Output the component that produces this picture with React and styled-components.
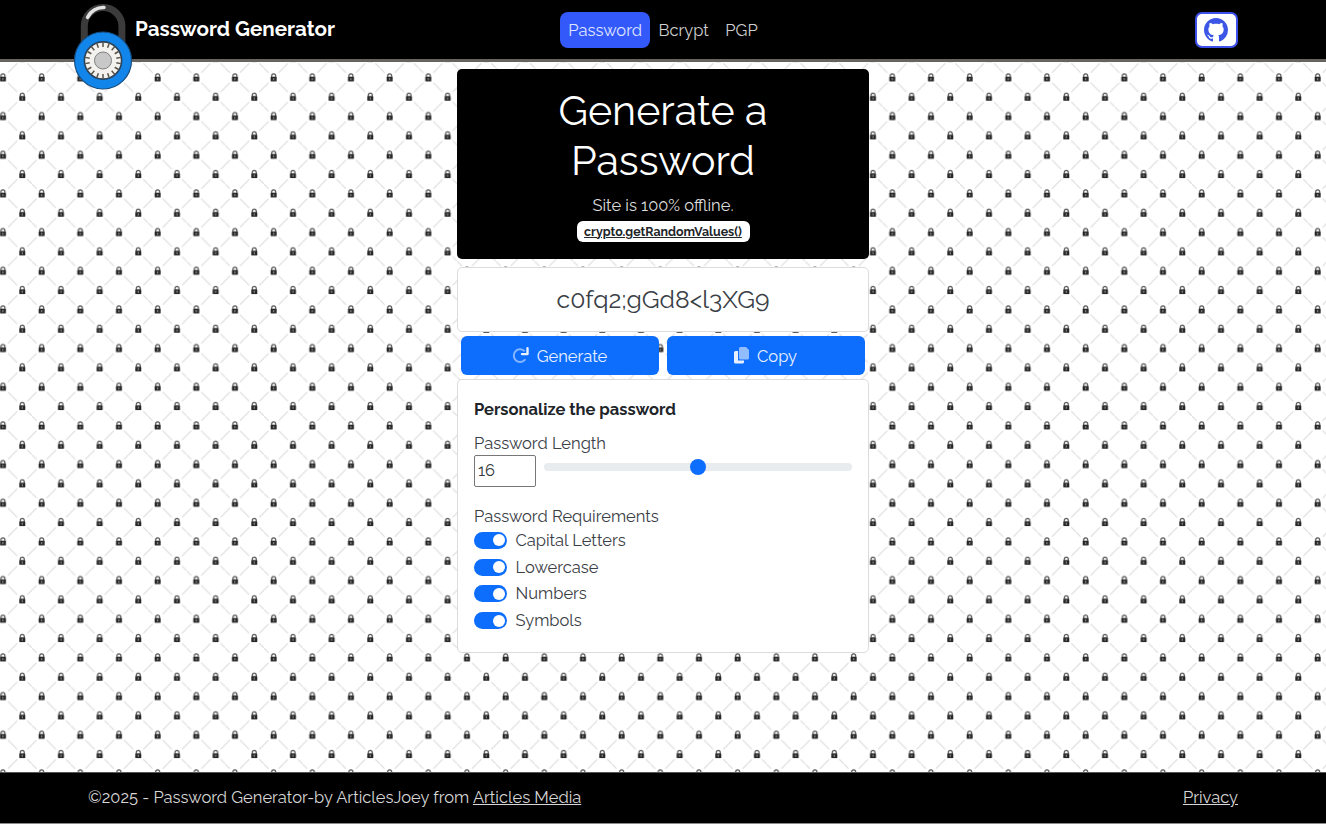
import React, { useState } from "react";
import styled, { createGlobalStyle } from "styled-components";
import { BsGithub } from "react-icons/bs";

const Global = createGlobalStyle`
  *, *::before, *::after { box-sizing: border-box; }
  body {
    margin: 0;
    background: #fff;
    color: #3a4046;
    font: 400 16.5px/25px Raleway, Lato, "Open Sans", sans-serif;
  }
`;

const Page = styled.div`
  display: flex;
  flex-direction: column;
  height: 825px;
  overflow: hidden;
`;

const Header = styled.header`
  position: relative;
  z-index: 2;
  flex: none;
  height: 62px;
  background: #000;
  border-bottom: 3px solid #67635f;
`;

const HeaderInner = styled.div`
  display: grid;
  grid-template-columns: 1fr auto 1fr;
  align-items: center;
  height: 59px;
  padding: 0 88px;
`;

const Brand = styled.a`
  position: relative;
  padding-left: 47px;
  color: #fff;
  font-size: 20.6px;
  font-weight: 700;
  white-space: nowrap;
`;

const Logo = styled.svg`
  position: absolute;
  left: -16px;
  top: -14px;
  width: 62px;
  height: 90px;
`;

const Nav = styled.nav`
  display: flex;
  gap: 0.5px;
`;

const NavLink = styled.a`
  height: 36px;
  padding: 0 8px;
  line-height: 37px;
  border-radius: 8px;
  color: ${(p) => (p.$active ? "#dfe5ff" : "#cfcfcf")};
  background: ${(p) => (p.$active ? "#3459fb" : "transparent")};
`;

const GithubButton = styled.a`
  justify-self: end;
  display: grid;
  place-items: center;
  width: 43px;
  height: 36px;
  padding-right: 1px;
  border: 2px solid #3d50ea;
  border-radius: 7px;
  background: #fff;
  color: #3b55e6;
`;

const Main = styled.main`
  position: relative;
  flex: none;
  height: 710px;
  padding-top: 7px;
`;

const Backdrop = styled.svg`
  position: absolute;
  inset: 0;
  width: 100%;
  height: 100%;
`;

const Column = styled.div`
  position: relative;
  width: 412px;
  margin: 0 auto;
`;

const Hero = styled.section`
  height: 190px;
  padding-top: 17px;
  border-radius: 5px;
  background: #000;
  color: #dcdcdc;
  text-align: center;
`;

const HeroTitle = styled.h1`
  margin: 0 auto 8px;
  width: 260px;
  color: #fff;
  font-size: 41.2px;
  font-weight: 400;
  line-height: 49.5px;
`;

const HeroNote = styled.div`
  height: 25px;
`;

const Badge = styled.span`
  display: block;
  width: 173px;
  height: 21px;
  margin: 2.5px auto 0;
  border-radius: 6px;
  background: #fff;
  color: #212529;
  font-size: 12.4px;
  font-weight: 700;
  line-height: 21px;
  text-decoration: underline;
  white-space: nowrap;
`;

const Card = styled.section`
  background: #fff;
  border: 1px solid #dcdcdc;
  border-radius: 5px;
`;

const Result = styled(Card)`
  height: 65px;
  margin-top: 8px;
  text-align: center;
  font-size: 24.8px;
  line-height: 63px;
`;

const Actions = styled.div`
  display: flex;
  gap: 8px;
  padding: 4px;
`;

const ActionButton = styled.button`
  display: flex;
  flex: 1;
  align-items: center;
  justify-content: center;
  gap: 8px;
  height: 39px;
  padding: 1px 1px 0 0;
  border: 0;
  border-radius: 6px;
  background: #0d6efd;
  color: #e9f1ff;
  font: inherit;

  svg { margin-top: -2px; }
`;

const Panel = styled(Card)`
  height: 274px;
  padding: 17px 16px;
`;

const PanelTitle = styled.h2`
  margin: 0 0 8px;
  color: #212529;
  font-size: 16.5px;
  font-weight: 700;
  line-height: 25px;
`;

const Label = styled.div`
  height: 25px;
  line-height: 26px;
`;

const LengthRow = styled.div`
  display: flex;
  height: 48px;
  gap: 8px;
`;

const LengthInput = styled.input`
  width: 62px;
  height: 32px;
  padding: 0 3px 2px;
  border: 1px solid #777;
  border-radius: 2px;
  background: #fff;
  color: #343a40;
  font: inherit;
`;

const Range = styled.input`
  appearance: none;
  flex: none;
  width: 308px;
  height: 24px;
  margin: 0;
  background: transparent;

  &::-webkit-slider-runnable-track {
    height: 8px;
    border-radius: 8px;
    background: #e9ecef;
  }

  &::-webkit-slider-thumb {
    appearance: none;
    width: 16px;
    height: 16px;
    margin-top: -4px;
    border-radius: 50%;
    background: #0d6efd;
  }
`;

const Switches = styled.div`
  margin-top: -1px;
`;

const SwitchRow = styled.label`
  display: flex;
  align-items: center;
  gap: 8.5px;
  height: 26.8px;
`;

const Track = styled.span`
  display: flex;
  align-items: center;
  justify-content: ${(p) => (p.$on ? "flex-end" : "flex-start")};
  width: 33px;
  height: 17px;
  padding: 0 2.5px;
  border-radius: 9px;
  background: ${(p) => (p.$on ? "#0d6efd" : "#ced4da")};

  &::after {
    content: "";
    width: 12px;
    height: 12px;
    border-radius: 50%;
    background: #fff;
  }
`;

const Footer = styled.footer`
  display: flex;
  align-items: flex-start;
  justify-content: space-between;
  flex: none;
  height: 52px;
  padding: 12px 88px 0;
  border-top: 1px solid #555;
  border-bottom: 1px solid #8a8a8a;
  background: #000;
  color: #d6d6d6;

  a { text-decoration: underline; }
`;

const TICKS = Array.from({ length: 18 }, (_, i) => i * 20);

function PadlockLogo() {
  return (
    <Logo viewBox="72 3 62 90">
      <path d="M84.300 48V26a18.800 18.500 0 0 1 37.600 0v22" fill="none" stroke="#3b3b3b" strokeWidth="7" />
      <path d="M87.500 17.500a17 17 0 0 1 16.500-10" fill="none" stroke="#e2e2e2" strokeWidth="3.400" strokeLinecap="round" />
      <circle cx="103" cy="60.5" r="28.5" fill="#1285ea" stroke="#164d80" strokeWidth="1.2" />
      <circle cx="103" cy="60.5" r="18.6" fill="#f3f2ee" stroke="#2b4258" strokeWidth="1.6" />
      {TICKS.map((a) => (
        <path key={a} d="M103 42.500v4.500" stroke="#5a5348" strokeWidth="1.5" transform={`rotate(${a} 103 60.5)`} />
      ))}
      <circle cx="103" cy="60.5" r="8.5" fill="#c8c8c8" stroke="#808080" strokeWidth="1" />
    </Logo>
  );
}

function Lock({ x, y }) {
  return (
    <g transform={`translate(${x} ${y})`}>
      <path d="M-2-.5v-1.300a2 2 0 0 1 4 0v1.300" fill="none" stroke="#4a4a4a" strokeWidth="1.1" />
      <rect x="-3" y="-.9" width="6" height="4.6" rx=".6" fill="#262626" />
      <rect x="-.5" y=".4" width="1" height="2" fill="#aaa" />
    </g>
  );
}

function LockPattern() {
  const t = 38.667;
  const h = t / 2;
  return (
    <Backdrop aria-hidden="true">
      <defs>
        <pattern id="locks" x={2.97 - h / 2} y={15.7 - h / 2} width={t} height={t} patternUnits="userSpaceOnUse">
          <g transform={`translate(${h / 2} ${h / 2})`}>
            <g stroke="#e2e2e2" strokeWidth="1.3">
              <path d={`M5 5L${h - 5} ${h - 5}M${h + 5} ${h - 5}L${t - 5} 5M${h - 5} ${h + 5}L5 ${t - 5}M${h + 5} ${h + 5}L${t - 5} ${t - 5}`} />
              <path d={`M-5 5L${-h / 2} ${h / 2}M5-5L${h / 2} ${-h / 2}M-5-5L${-h / 2} ${-h / 2}`} />
            </g>
            <Lock x={0} y={0} />
            <Lock x={h} y={h} />
          </g>
        </pattern>
      </defs>
      <rect width="100%" height="100%" fill="url(#locks)" />
    </Backdrop>
  );
}

function RotateIcon() {
  return (
    <svg width="17" height="17" viewBox="0 0 17 16" fill="none" stroke="currentColor">
      <path d="M12 3.200A6.300 6.300 0 1 0 12.800 12.300" strokeWidth="2" strokeLinecap="round" opacity=".55" />
      <path d="M15.500 .8v5.800H10" strokeWidth="2.400" strokeLinecap="round" strokeLinejoin="round" />
    </svg>
  );
}

function CopyIcon() {
  return (
    <svg width="15" height="17" viewBox="0 0 15 17" fill="currentColor">
      <path d="M1.500 4H4v9.500h6V15a1.500 1.500 0 0 1-1.500 1.500h-7A1.500 1.500 0 0 1 0 15V5.500A1.500 1.500 0 0 1 1.500 4z" />
      <path d="M6.500 0H12l3 3v8a1.500 1.500 0 0 1-1.500 1.500h-7A1.500 1.500 0 0 1 5 11V1.500A1.500 1.500 0 0 1 6.500 0z" opacity=".6" />
    </svg>
  );
}

const REQUIREMENTS = ["Capital Letters", "Lowercase", "Numbers", "Symbols"];

export default function App() {
  const [length, setLength] = useState(16);
  const [off, setOff] = useState({});
  return (
    <Page>
      <Global />
      <Header>
        <HeaderInner>
          <Brand>
            <PadlockLogo />
            Password Generator
          </Brand>
          <Nav>
            <NavLink $active>Password</NavLink>
            <NavLink>Bcrypt</NavLink>
            <NavLink>PGP</NavLink>
          </Nav>
          <GithubButton aria-label="GitHub">
            <BsGithub size={24} />
          </GithubButton>
        </HeaderInner>
      </Header>
      <Main>
        <LockPattern />
        <Column>
          <Hero>
            <HeroTitle>Generate a Password</HeroTitle>
            <HeroNote>Site is 100% offline.</HeroNote>
            <Badge>crypto.getRandomValues()</Badge>
          </Hero>
          <Result>{"c0fq2;gGd8<l3XG9"}</Result>
          <Actions>
            <ActionButton><RotateIcon />Generate</ActionButton>
            <ActionButton><CopyIcon />Copy</ActionButton>
          </Actions>
          <Panel>
            <PanelTitle>Personalize the password</PanelTitle>
            <Label>Password Length</Label>
            <LengthRow>
              <LengthInput value={length} onChange={(e) => setLength(e.target.value)} />
              <Range type="range" min="0" max="32" value={length} onChange={(e) => setLength(e.target.value)} />
            </LengthRow>
            <Label>Password Requirements</Label>
            <Switches>
              {REQUIREMENTS.map((name) => (
                <SwitchRow key={name} onClick={() => setOff({ ...off, [name]: !off[name] })}>
                  <Track $on={!off[name]} />
                  {name}
                </SwitchRow>
              ))}
            </Switches>
          </Panel>
        </Column>
      </Main>
      <Footer>
        <span>©2025 - Password Generator-by ArticlesJoey from <a>Articles Media</a></span>
        <a>Privacy</a>
      </Footer>
    </Page>
  );
}
